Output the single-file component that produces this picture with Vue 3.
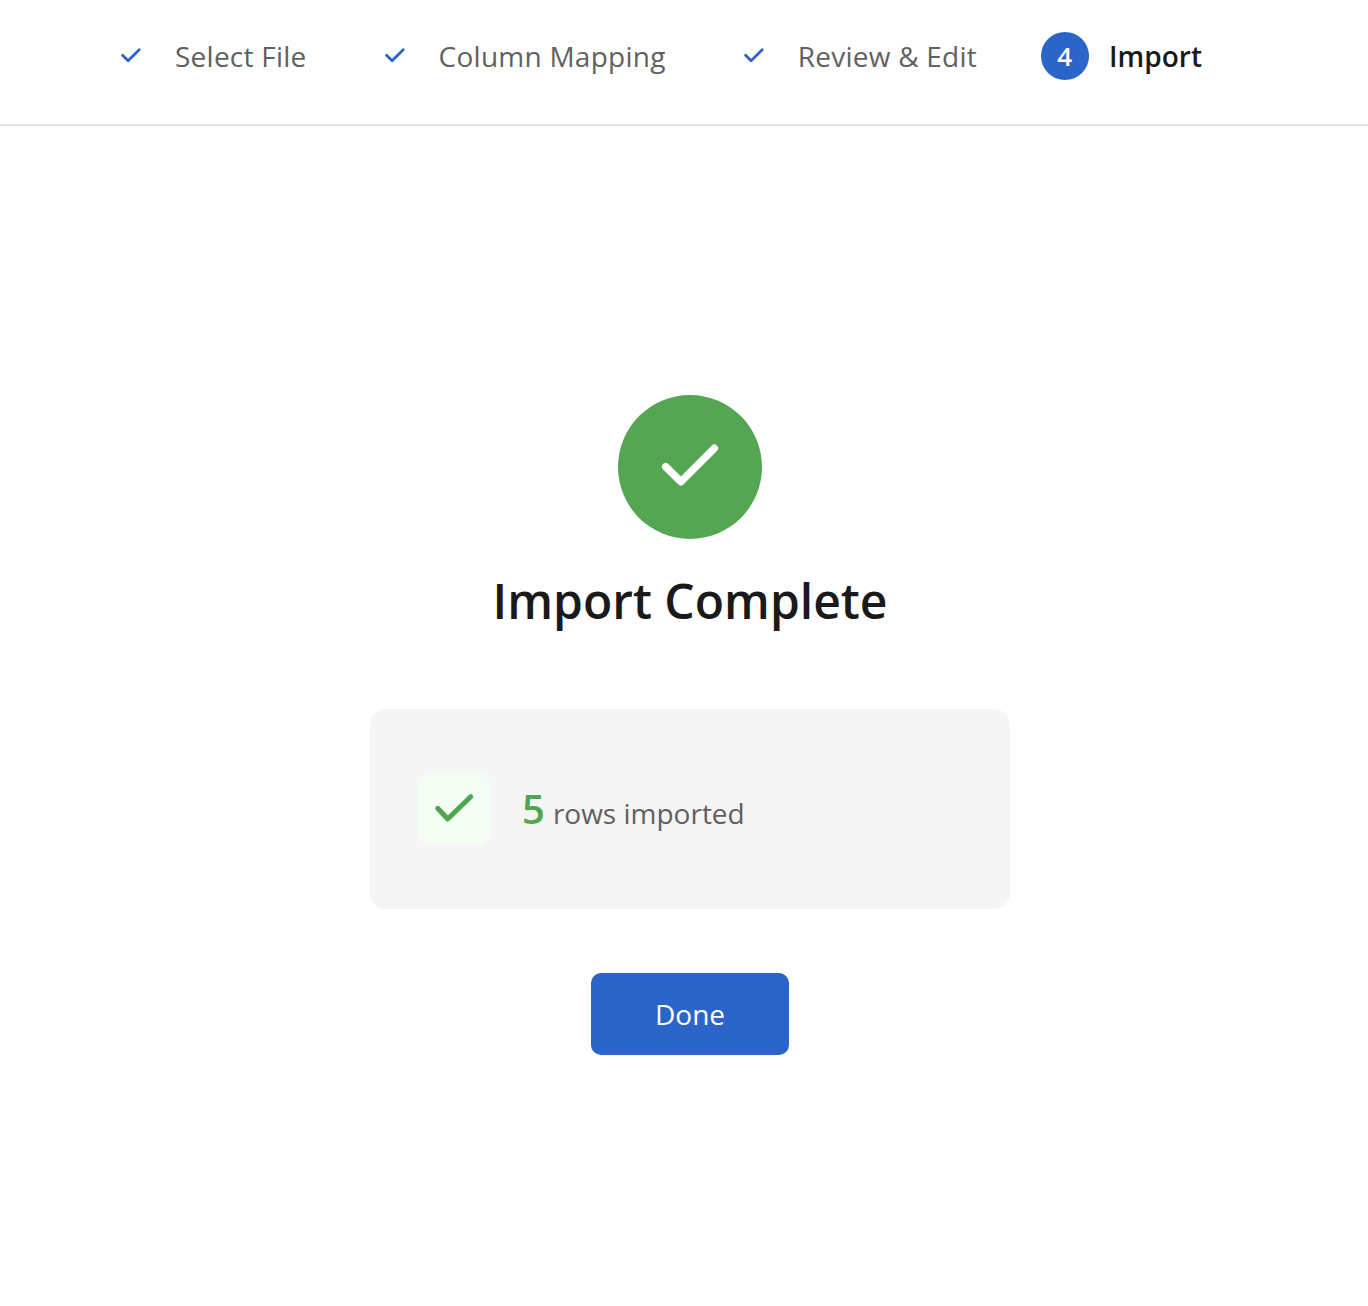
<script setup>
const steps = [
  { label: "Select File", done: true },
  { label: "Column Mapping", done: true },
  { label: "Review & Edit", done: true },
  { label: "Import", done: false, num: 4 },
];
</script>

<template>
  <div class="page">
    <header class="stepper">
      <div v-for="step in steps" :key="step.label" class="step" :class="{ active: !step.done }">
        <span class="step-mark">
          <svg v-if="step.done" width="48" height="48" viewBox="0 0 48 48" fill="none">
            <path d="M15.600 23.200l5.500 5.500L32.200 17.700" stroke="#2b65c9" stroke-width="2.800" stroke-linecap="round" stroke-linejoin="round" />
          </svg>
          <span v-else class="step-num">{{ step.num }}</span>
        </span>
        <span class="step-label">{{ step.label }}</span>
      </div>
    </header>

    <main class="content">
      <div class="success-circle">
        <svg width="144" height="144" viewBox="0 0 144 144" fill="none">
          <path d="M47.700 71.700L63 86.700L96.300 53.300" stroke="#fff" stroke-width="7.500" stroke-linecap="round" stroke-linejoin="round" />
        </svg>
      </div>
      <h1 class="title">Import Complete</h1>

      <section class="summary">
        <div class="summary-icon">
          <svg width="72" height="72" viewBox="0 0 72 72" fill="none">
            <path d="M19.700 35.300L29.700 46L52.700 23.700" stroke="#4fa650" stroke-width="5" stroke-linecap="round" stroke-linejoin="round" />
          </svg>
        </div>
        <div class="summary-text">
          <span class="count">5</span>
          <span class="count-label">rows imported</span>
        </div>
      </section>

      <button class="done-btn" type="button">Done</button>
    </main>
  </div>
</template>

<style>
html,
body {
  background: #fff;
}
</style>

<style scoped>
.page {
  min-height: 1306px;
  background: #fff;
  font-family: "Open Sans", "Noto Sans", sans-serif;
  color: #1a1a1a;
}

/* Stepper */
.stepper {
  display: flex;
  align-items: center;
  gap: 64px;
  height: 112px;
  padding: 0 0 12px 107px;
  border-bottom: 2px solid #e0e0e0;
}

.step {
  display: flex;
  align-items: center;
  gap: 20px;
}

.step-mark {
  display: flex;
  width: 48px;
  height: 48px;
  flex-shrink: 0;
}

.step-num {
  display: flex;
  align-items: center;
  justify-content: center;
  width: 48px;
  height: 48px;
  padding-right: 1px;
  box-sizing: border-box;
  border-radius: 50%;
  background: #2b65c9;
  color: #fff;
  font-size: 26px;
  font-weight: 600;
}

.step-label {
  font-size: 28px;
  line-height: 40px;
  letter-spacing: 0.25px;
  color: #616161;
}

.step.active .step-label {
  color: #1a1a1a;
  font-weight: 600;
  letter-spacing: 0;
}

/* Result */
.content {
  display: flex;
  flex-direction: column;
  align-items: center;
  padding: 269px 0 0 12px;
}

.success-circle {
  display: flex;
  width: 144px;
  height: 144px;
  border-radius: 50%;
  background: #54a653;
}

.title {
  margin: 24px 0 0;
  font-size: 48px;
  line-height: 76px;
  font-weight: 600;
  color: #1a1a1a;
}

.summary {
  display: flex;
  align-items: center;
  gap: 32px;
  box-sizing: border-box;
  width: 640px;
  height: 200px;
  margin-top: 70px;
  padding: 0 48px;
  border-radius: 16px;
  background: #f5f5f5;
}

.summary-icon {
  display: flex;
  width: 72px;
  height: 72px;
  border-radius: 12px;
  background: #f4fdf4;
}

.summary-text {
  display: flex;
  align-items: baseline;
  gap: 8px;
}

.count {
  font-size: 40px;
  line-height: 56px;
  font-weight: 600;
  color: #4fa650;
}

.count-label {
  font-size: 28px;
  color: #616161;
}

.done-btn {
  width: 198px;
  height: 82px;
  margin-top: 64px;
  border: none;
  border-radius: 10px;
  background: #2b65c9;
  color: #fff;
  font-family: inherit;
  font-size: 28px;
  font-weight: 500;
  cursor: pointer;
}
</style>
